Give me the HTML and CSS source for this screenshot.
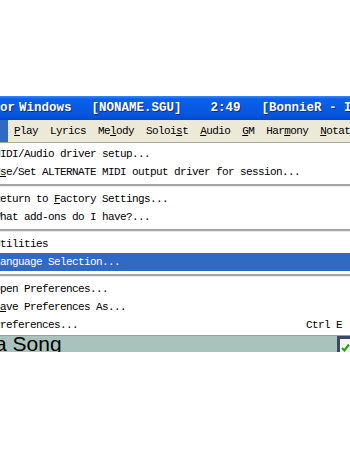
FILE: index.html
```html
<html>
    <head>
        <meta charset="utf-8">
        <link rel="stylesheet" href="styles.css">
    </head>
    <body>
        <section class="screen">
            <div class="blank-top"></div>

            <div class="titlebar">
                <span class="title-or">or</span>
                <span class="title-win">Windows</span>
                <span class="title-file">[NONAME.SGU]</span>
                <span class="title-time">2:49</span>
                <span class="title-style">[BonnieR - I</span>
            </div>

            <div class="menubar">
                <span class="menu-item active"></span>
                <span class="menu-item"><u>P</u>lay</span>
                <span class="menu-item">Lyrics</span>
                <span class="menu-item">Me<u>l</u>ody</span>
                <span class="menu-item">Soloi<u>s</u>t</span>
                <span class="menu-item"><u>A</u>udio</span>
                <span class="menu-item"><u>G</u>M</span>
                <span class="menu-item">Har<u>m</u>ony</span>
                <span class="menu-item"><u>N</u>otation</span>
            </div>

            <div class="dropdown">
                <div class="row"><span>MIDI/Audio driver setup...</span></div>
                <div class="row"><span>U<u>s</u>e/Set ALTERNATE MIDI output driver for session...</span></div>
                <div class="sep"></div>
                <div class="row"><span>Return to <u>F</u>actory Settings...</span></div>
                <div class="row"><span>What add-ons do I have?...</span></div>
                <div class="sep"></div>
                <div class="row"><span>Utilities</span></div>
                <div class="row selected"><span>Language Selection...</span></div>
                <div class="sep"></div>
                <div class="row"><span>Open Preferences...</span></div>
                <div class="row"><span>S<u>a</u>ve Preferences As...</span></div>
                <div class="row"><span>Preferences...</span><span>Ctrl E</span></div>
            </div>

            <div class="songbar">
                <span class="song-title">a Song</span>
                <svg class="check" width="14" height="17" viewBox="0 0 14 17">
                    <rect x="0" y="0" width="14" height="17" fill="#3b4866"/>
                    <rect x="3" y="3" width="11" height="14" fill="#f4f6f4"/>
                    <path d="M5 12 L7.5 14.5 L12 8.5" stroke="#1fa31f" stroke-width="2.2" fill="none"/>
                </svg>
            </div>
        </section>
    </body>
</html>
```

FILE: styles.css
```css
* { box-sizing: border-box; }

html, body {
    margin: 0;
    padding: 0;
    background: #ffffff;
}

.screen {
    width: 350px;
    height: 450px;
    overflow: hidden;
    font-family: "Liberation Mono", monospace;
    font-size: 11px;
    letter-spacing: -0.6px;
    color: #000;
}

.blank-top { height: 96px; }

.titlebar {
    display: flex;
    height: 24px;
    line-height: 25px;
    overflow: hidden;
    color: #fff;
    font-size: 12.5px;
    font-weight: bold;
    letter-spacing: 0;
    text-shadow: 1px 1px 0 #0b2a8a;
    background: linear-gradient(to bottom, #3a89f5 0px, #0b60ea 3px, #085ae4 12px, #0654dc 20px, #0447c9 24px);
}
.titlebar span {
    flex: none;
    white-space: pre;
}
.title-or { margin-left: 0; }
.title-win { margin-left: 4px; }
.title-file { margin-left: 20px; }
.title-time { margin-left: 29px; }
.title-style { margin-left: 21px; }

.menubar {
    display: flex;
    height: 22px;
    line-height: 23px;
    overflow: hidden;
    background: #ece9d8;
}
.menu-item {
    flex: none;
    padding: 0 6px;
    white-space: pre;
}
.menu-item.active {
    width: 8px;
    padding: 0;
    background: #316ac5;
}

.dropdown {
    margin-left: -6px;
    width: 362px;
    border-top: 1px solid #aca899;
    border-bottom: 1px solid #9d9d9d;
    padding: 2px 0 1px 0;
    background: #fff;
}
.row {
    display: flex;
    justify-content: space-between;
    height: 18px;
    line-height: 19px;
    padding-right: 14px;
}
.row span {
    flex: none;
    white-space: pre;
}
.row.selected {
    background: #316ac5;
    color: #fff;
}
.sep {
    height: 9px;
    padding-top: 3px;
}
.sep::before {
    content: "";
    display: block;
    height: 2px;
    background: #a5a5a5;
    border-bottom: 1px solid #ececec;
}

.songbar {
    display: flex;
    height: 16px;
    overflow: hidden;
    background: #a9c3bc;
}
.song-title {
    flex: none;
    margin-left: -5px;
    font-family: "Liberation Sans", sans-serif;
    font-size: 21px;
    line-height: 16px;
    letter-spacing: 0;
    white-space: pre;
}
.check {
    flex: none;
    margin-left: auto;
    margin-right: -1px;
}
```
